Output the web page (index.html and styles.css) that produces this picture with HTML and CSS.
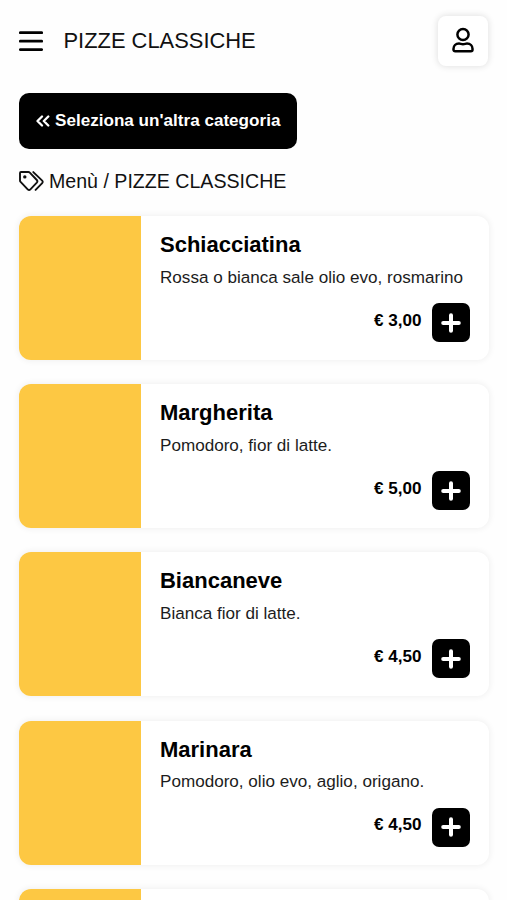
FILE: index.html
```html
<!DOCTYPE html>
<html lang="it">
<head>
<meta charset="utf-8">
<meta name="viewport" content="width=device-width, initial-scale=1">
<title>Pizze classiche</title>
<link rel="stylesheet" href="styles.css">
</head>
<body>
<svg class="sprite" aria-hidden="true">
  <symbol id="plus" viewBox="0 0 20 20"><path d="M10 2.200v15.600M2.200 10h15.600" fill="none" stroke="currentColor" stroke-width="4" stroke-linecap="round"/></symbol>
</svg>
<header class="topbar">
  <svg class="menu-icon" viewBox="0 0 24 20"><path d="M1.300 1.700h21.400M1.300 10.200h21.400M1.300 18.600h21.400" fill="none" stroke="currentColor" stroke-width="2.700" stroke-linecap="round"/></svg>
  <h1 class="page-title">PIZZE CLASSICHE</h1>
  <a class="account" href="#" aria-label="Account">
    <svg class="account-icon" viewBox="0 0 22 26"><g fill="none" stroke="currentColor" stroke-width="2.500" stroke-linejoin="round"><circle cx="11" cy="7.500" r="5.600"/><path d="M7 16.600c1.400 0 2.200.6 4 .6s2.600-.6 4-.6c3.400 0 5.500 2.300 5.500 5.200v.9c0 .9-.7 1.500-1.600 1.500H3.100c-.9 0-1.600-.6-1.600-1.500v-.9c0-2.900 2.100-5.200 5.500-5.200z"/></g></svg>
  </a>
</header>
<main>
  <a class="back" href="#">
    <svg class="back-icon" viewBox="0 0 14 12"><path d="M6 1.500 1.500 6 6 10.500M12.300 1.500 7.800 6l4.500 4.500" fill="none" stroke="currentColor" stroke-width="2.300" stroke-linecap="round" stroke-linejoin="round"/></svg>
    <span>Seleziona un'altra categoria</span>
  </a>
  <div class="crumbs">
    <svg class="tags-icon" viewBox="0 0 25 20"><g fill="none" stroke="currentColor" stroke-width="1.900" stroke-linecap="round" stroke-linejoin="round"><path d="M1 2v7.400c0 .6.200 1.100.6 1.500l7.100 7.400c.8.800 1.900.800 2.700 0l6.400-6.600c.7-.8.7-1.900 0-2.700L10.800 1.600c-.4-.4-.9-.6-1.500-.6H2C1.400 1 1 1.400 1 2z"/><path d="m14.300 1.100 8.900 8.500c.7.700.7 1.800 0 2.500l-6.600 6.800"/></g><circle cx="5.800" cy="5.900" r="1.700" fill="currentColor"/></svg>
    <span>Menù / PIZZE CLASSICHE</span>
  </div>
  <div class="list">
    <article class="card"><div class="photo"></div><div class="body"><h2>Schiacciatina</h2><p>Rossa o bianca sale olio evo, rosmarino</p><div class="buy"><span class="price">€ 3,00</span><button class="add" aria-label="Aggiungi"><svg><use href="#plus"/></svg></button></div></div></article>
    <article class="card"><div class="photo"></div><div class="body"><h2>Margherita</h2><p>Pomodoro, fior di latte.</p><div class="buy"><span class="price">€ 5,00</span><button class="add" aria-label="Aggiungi"><svg><use href="#plus"/></svg></button></div></div></article>
    <article class="card"><div class="photo"></div><div class="body"><h2>Biancaneve</h2><p>Bianca fior di latte.</p><div class="buy"><span class="price">€ 4,50</span><button class="add" aria-label="Aggiungi"><svg><use href="#plus"/></svg></button></div></div></article>
    <article class="card"><div class="photo"></div><div class="body"><h2>Marinara</h2><p>Pomodoro, olio evo, aglio, origano.</p><div class="buy"><span class="price">€ 4,50</span><button class="add" aria-label="Aggiungi"><svg><use href="#plus"/></svg></button></div></div></article>
    <article class="card"><div class="photo"></div><div class="body"></div></article>
  </div>
</main>
</body>
</html>
```
FILE: styles.css
```css
* { box-sizing: border-box; }
html, body { height: 100%; }
body {
  margin: 0;
  padding: 0 18px 0 19px;
  overflow: hidden;
  background: #fefefe;
  color: #000;
  font-family: "Liberation Sans", Arial, sans-serif;
  font-size: 17.1px;
}
.sprite { display: none; }
svg { display: block; flex: none; }
.topbar { display: flex; align-items: center; height: 82px; padding-right: 1px; }
.menu-icon { width: 24px; height: 20px; }
.page-title { margin: 0 auto 0 20.500px; font-size: 21.900px; font-weight: 400; line-height: 26px; color: #111; }
.account {
  display: flex;
  align-items: center;
  justify-content: center;
  width: 50px;
  height: 50px;
  border-radius: 8px;
  background: #fff;
  color: #000;
  box-shadow: 0 0 6px 1px rgba(0, 0, 0, .11);
}
.account-icon { width: 22px; height: 26px; margin-bottom: 2px; }
.back {
  display: flex;
  align-items: center;
  gap: 5px;
  width: 278px;
  height: 56px;
  margin-top: 11px;
  padding-left: 17px;
  border-radius: 10px;
  background: #000;
  color: #fff;
  font-weight: 700;
  text-decoration: none;
  white-space: nowrap;
}
.back-icon { width: 14px; height: 12px; }
.crumbs { display: flex; align-items: center; gap: 5px; height: 24px; margin-top: 20px; font-size: 19.6px; color: #111; }
.tags-icon { width: 25px; height: 20px; }
.list { display: grid; gap: 24.200px; margin-top: 23px; }
.card {
  display: flex;
  height: 144px;
  border-radius: 12px;
  background: #fff;
  overflow: hidden;
  box-shadow: 0 0 6px 1px rgba(0, 0, 0, .06);
}
.photo { flex: none; width: 122.200px; background: #fdc843; }
.body { flex: 1; display: flex; flex-direction: column; padding: 16px 19px 18px 18.800px; }
h2 { margin: 0; font-size: 22px; line-height: 26px; }
p { margin: 9.500px 0 0; line-height: 20px; color: #1c1c1c; white-space: nowrap; }
.buy { display: flex; align-items: center; justify-content: flex-end; gap: 10.500px; margin-top: auto; }
.price { font-weight: 700; padding-bottom: 4px; }
.add { display: flex; align-items: center; justify-content: center; width: 38px; height: 39px; padding: 0; border: 0; border-radius: 7px; background: #000; color: #fff; }
.add svg { width: 20px; height: 20px; }
```
